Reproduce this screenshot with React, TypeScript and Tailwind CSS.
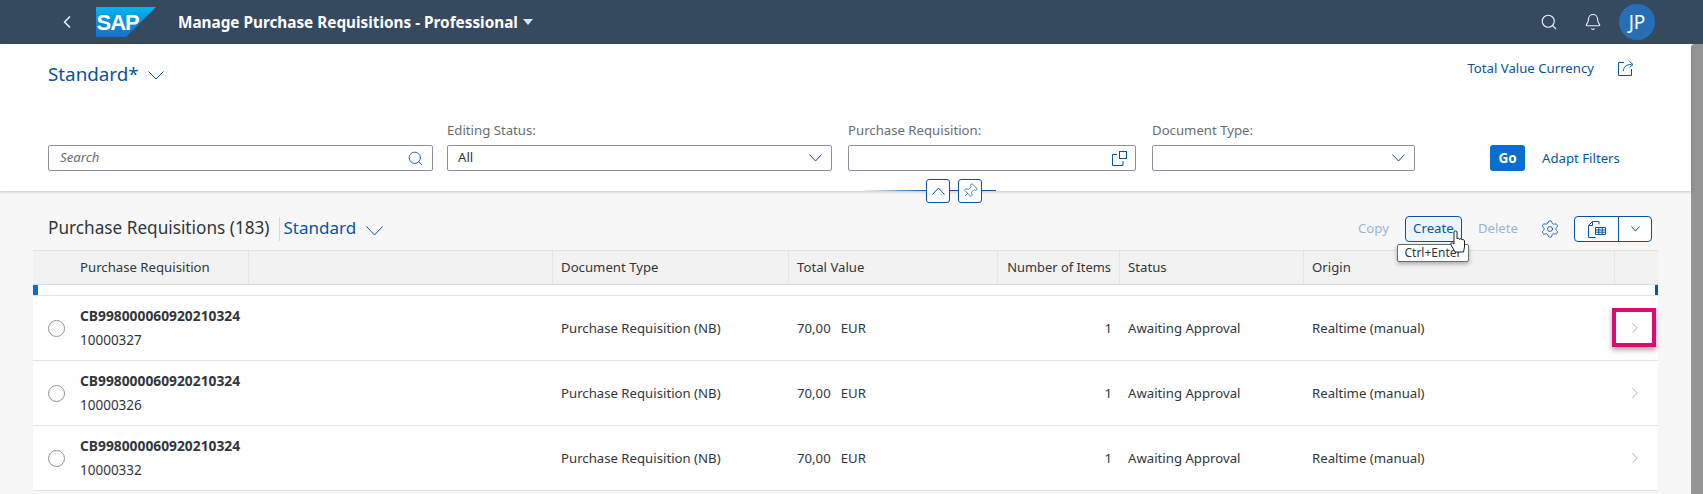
import { Search, Bell, ChevronLeft, ChevronRight, Settings, Pin } from 'lucide-react';

const rows = ['10000327', '10000326', '10000332'];

const columns = [
  { label: 'Purchase Requisition', className: 'pl-[47px]' },
  { label: '', className: 'pl-2' },
  { label: 'Document Type', className: 'pl-2' },
  { label: 'Total Value', className: 'pl-2' },
  { label: 'Number of Items', className: 'pl-2 justify-end pr-2 whitespace-nowrap text-[12.900px]' },
  { label: 'Status', className: 'pl-2' },
  { label: 'Origin', className: 'pl-2' },
  { label: '', className: '' },
];

const gridCols = 'grid-cols-[216px_304px_236px_209px_122px_184px_311px_43px]';

function SapLogo() {
  return (
    <svg width="60" height="30" viewBox="0 0 60 30" className="shrink-0">
      <defs>
        <linearGradient id="sapBlue" x1="0" y1="0" x2="0" y2="1">
          <stop offset="0" stopColor="#00b8f1" />
          <stop offset="0.5" stopColor="#0a8fdc" />
          <stop offset="1" stopColor="#1870c5" />
        </linearGradient>
      </defs>
      <polygon points="0,0 60,0 30,30 0,30" fill="url(#sapBlue)" />
      <text x="0.500" y="23" fill="#fff" fontSize="22" fontWeight="800" fontFamily="'Liberation Sans', sans-serif" letterSpacing="-1">
        SAP
      </text>
    </svg>
  );
}

function Chevron({ width, up }: { width: number; up?: boolean }) {
  const h = Math.round(width / 2) + 1;
  return (
    <svg width={width} height={h} viewBox={`0 0 ${width} ${h}`} fill="none" stroke="#0854a0" strokeWidth="1" className="shrink-0">
      <path d={up ? `M.5 ${h - 0.5}L${width / 2} 1L${width - 0.5} ${h - 0.5}` : `M.5 .5L${width / 2} ${h - 1}L${width - 0.5} .5`} />
    </svg>
  );
}

function ShareIcon() {
  return (
    <svg width="17" height="16" viewBox="0 0 17 16" fill="none" stroke="#0854a0" strokeWidth="1" className="shrink-0">
      <path d="M6 2.500H.5v13h13V9" />
      <path d="M5.500 11c0-4 2.500-6.500 8-6.500M11.500 1.500l3.500 3-3.500 3" />
    </svg>
  );
}

function ValueHelpIcon() {
  return (
    <svg width="15" height="15" viewBox="0 0 15 15" fill="none" stroke="#0854a0" strokeWidth="1">
      <rect x="7.500" y="0.500" width="7" height="7" />
      <path d="M5 3.500H.5v11h10.500V10" />
    </svg>
  );
}

function ExportIcon() {
  return (
    <svg width="18" height="17" viewBox="0 0 18 17" fill="none" stroke="#0854a0" strokeWidth="1">
      <path d="M4.500.5h6.500v3M4.500.5L.5 4.500v12h7M.5 4.500h4v-4" />
      <path d="M7.500 6.500h10v7h-10zM7.500 9h10M7.500 11.200h10M10.800 6.500v7M14.200 6.500v7" />
    </svg>
  );
}

function Field({ label, width, children }: { label: string; width: string; children: React.ReactNode }) {
  return (
    <div className={`flex flex-col shrink-0 ${width}`}>
      <label className="text-[13.200px] leading-[18px] mb-[6px] text-[#6a6d70]">{label}</label>
      <div className="h-[26px] bg-white border border-[#89919a] rounded-[2px] flex items-center justify-between pl-[10px] pr-[8px] text-[13.200px] text-[#32363a]">
        {children}
      </div>
    </div>
  );
}

export default function App() {
  return (
    <div className="w-[1703px] h-[494px] overflow-hidden flex flex-col bg-white font-['Noto_Sans',sans-serif] text-[#32363a]">
      <header className="h-[44px] shrink-0 bg-[#354a5f] flex items-center pl-[57px] pr-[48px] text-white">
        <ChevronLeft className="w-[20px] h-[20px] text-[#e3f0ff]" strokeWidth={2} />
        <div className="ml-[19px] mb-[1px]">
          <SapLogo />
        </div>
        <span className="ml-[22px] text-[15.300px] font-bold">Manage Purchase Requisitions - Professional</span>
        <span className="ml-[5px] w-0 h-0 border-x-[5px] border-x-transparent border-t-[6px] border-t-[#d1e8ff]" />
        <Search className="ml-auto w-[18px] h-[18px] text-[#e3f0ff]" strokeWidth={1.500} />
        <Bell className="ml-[26px] w-[18px] h-[18px] text-[#e3f0ff]" strokeWidth={1.500} />
        <div className="ml-[17px] w-[36px] h-[36px] rounded-full bg-[#266fb7] flex items-center justify-center text-[19px]">JP</div>
      </header>

      <div className="flex flex-1 min-h-0">
        <main className="flex-1 min-w-0 bg-[#f7f7f7]">
          <section className="relative h-[147px] bg-white shadow-[0_1px_3px_rgba(0,0,0,0.2)] px-[48px]">
            <div className="flex items-start">
              <div className="flex items-center mt-[15px] text-[#0854a0]">
                <span className="text-[18.800px] leading-[30px]">Standard*</span>
                <span className="ml-[9px] mt-[2px]">
                  <Chevron width={16} />
                </span>
              </div>
              <a className="ml-auto mt-[14px] text-[13.200px] leading-[20px] text-[#0854a0]">Total Value Currency</a>
              <div className="ml-[24px] mr-[8px] mt-[16px]">
                <ShareIcon />
              </div>
            </div>
            <div className="flex items-end mt-[32px]">
              <div className="shrink-0 w-[385px] h-[26px] mr-[14px] bg-white border border-[#89919a] rounded-[2px] flex items-center justify-between pl-[11px] pr-[8px]">
                <span className="text-[13.200px] italic text-[#6a6d70]">Search</span>
                <Search className="w-[17px] h-[17px] text-[#0854a0]" strokeWidth={1.200} />
              </div>
              <div className="mr-[16px]">
                <Field label="Editing Status:" width="w-[385px]">
                  All
                  <span className="ml-auto mr-[1px]">
                    <Chevron width={13} />
                  </span>
                </Field>
              </div>
              <div className="mr-[16px]">
                <Field label="Purchase Requisition:" width="w-[288px]">
                  <span />
                  <ValueHelpIcon />
                </Field>
              </div>
              <Field label="Document Type:" width="w-[263px]">
                <span className="ml-auto mr-[1px]">
                  <Chevron width={13} />
                </span>
              </Field>
              <button className="ml-[75px] w-[35px] h-[26px] bg-[#0a6ed1] rounded-[3px] text-white text-[13.500px] font-bold">Go</button>
              <a className="ml-[17px] h-[26px] leading-[26px] text-[13.200px] text-[#0854a0]">Adapt Filters</a>
            </div>

            <div className="absolute left-[860px] top-[146px] w-[136px] h-px bg-gradient-to-r from-transparent via-[#0854a0] to-[#0854a0]" />
            <div className="absolute left-[926px] top-[135px] flex gap-[8px]">
              <button className="w-[24px] h-[24px] bg-white border border-[#0854a0] rounded-[3px] flex items-center justify-center">
                <Chevron width={13} up />
              </button>
              <button className="w-[24px] h-[24px] bg-white border border-[#0854a0] rounded-[3px] flex items-center justify-center text-[#0854a0]">
                <Pin className="w-[16px] h-[16px] rotate-45" strokeWidth={1} />
              </button>
            </div>
          </section>

          <section className="relative mt-[25px]">
            <div className="flex items-center h-[26px] pl-[48px] pr-[39px]">
              <span className="text-[17.200px] leading-[26px] -mt-[3px] text-[#32363a]">Purchase Requisitions (183)</span>
              <span className="ml-[9px] w-px h-[24px] bg-[#d9d9d9]" />
              <span className="ml-[4px] text-[17px] leading-[26px] -mt-[2px] text-[#0854a0]">Standard</span>
              <span className="ml-[10px] mt-[3px]">
                <Chevron width={17} />
              </span>
              <span className="ml-auto text-[13.200px] text-[#0854a0] opacity-40">Copy</span>
              <button className="ml-[16px] w-[57px] h-[26px] bg-[#ebf5fe] border border-[#0854a0] rounded-[4px] text-[13.200px] text-[#0854a0]">Create</button>
              <span className="ml-[16px] text-[13.200px] text-[#0854a0] opacity-40">Delete</span>
              <Settings className="ml-[22px] w-[20px] h-[20px] text-[#0854a0]" strokeWidth={1} />
              <div className="ml-[14px] w-[78px] h-[26px] flex border border-[#0854a0] rounded-[4px] bg-white">
                <div className="w-[44px] flex items-center justify-center border-r border-[#0854a0]">
                  <ExportIcon />
                </div>
                <div className="flex-1 flex items-center justify-center">
                  <Chevron width={9} />
                </div>
              </div>
            </div>

            <div className="absolute left-[1397px] top-[28px] h-[18px] w-[72px] bg-white border border-[#6a6d70] rounded-[2px] shadow-[0_2px_4px_rgba(0,0,0,0.3)] text-[12px] leading-[16px] text-center text-[#32363a] z-10">
              Ctrl+Enter
            </div>
            <svg width="16" height="24" viewBox="0 0 16 24" className="absolute left-[1450px] top-[14px] z-20">
              <path
                d="M4 2c0-1.500 3-1.500 3 0v7c0-1 2.500-1 2.500.5 0-1 2.500-1 2.500.5 0-1 2.500-.5 2.500 1v6c0 2-1 3-1 5H5c-1-2-2-4-4-7-1-2 1-3 3-1z"
                fill="#fff"
                stroke="#222"
                strokeWidth="1"
              />
            </svg>

            <div className="ml-[33px] w-[1625px] mt-[8px] bg-white">
              <div className={`grid ${gridCols} h-[35px] bg-[#f2f2f2] border-y border-[#e0e0e0] text-[13.200px] text-[#32363a]`}>
                {columns.map((col, i) => (
                  <div key={i} className={`flex items-center border-r border-[#e5e5e5] last:border-r-0 ${col.className}`}>
                    {col.label}
                  </div>
                ))}
              </div>
              <div className="h-[11px] flex justify-between border-b border-[#e5e5e5]">
                <span className="w-[5px] bg-[#0a6ed1]" />
                <span className="w-[3px] bg-[#0854a0]" />
              </div>
              {rows.map((id, i) => (
                <div key={id} className={`relative grid ${gridCols} h-[65px] border-b border-[#e5e5e5] text-[13.200px]`}>
                  <div className="flex items-center">
                    <span className="ml-[15px] w-[17px] h-[17px] rounded-full border border-[#89919a] bg-white shrink-0" />
                    <div className="ml-[15px]">
                      <div className="font-bold text-[13.800px] leading-[20px] mb-[4px] whitespace-nowrap">CB998000060920210324</div>
                      <div className="text-[13.500px] leading-[20px]">{id}</div>
                    </div>
                  </div>
                  <div />
                  <div className="flex items-center pl-2 pt-px">Purchase Requisition (NB)</div>
                  <div className="flex items-center pl-2 pt-px">
                    70,00<span className="ml-[10px]">EUR</span>
                  </div>
                  <div className="flex items-center justify-end pr-2 pt-px">1</div>
                  <div className="flex items-center pl-2 pt-px">Awaiting Approval</div>
                  <div className="flex items-center pl-2 pt-px">Realtime (manual)</div>
                  <div className="flex items-center justify-center pr-[4px]">
                    <ChevronRight className="w-[18px] h-[18px] text-[#89919a]" strokeWidth={0.900} />
                  </div>
                  {i === 0 && (
                    <div className="absolute left-[1579px] top-[12px] w-[44px] h-[39px] border-[4px] border-[#de0a6e] shadow-[0_3px_5px_rgba(0,0,0,0.35)]" />
                  )}
                </div>
              ))}
            </div>
          </section>
        </main>
        <div className="w-[12px] shrink-0 bg-[#949494] rounded-tl-[4px]" />
      </div>
    </div>
  );
}
